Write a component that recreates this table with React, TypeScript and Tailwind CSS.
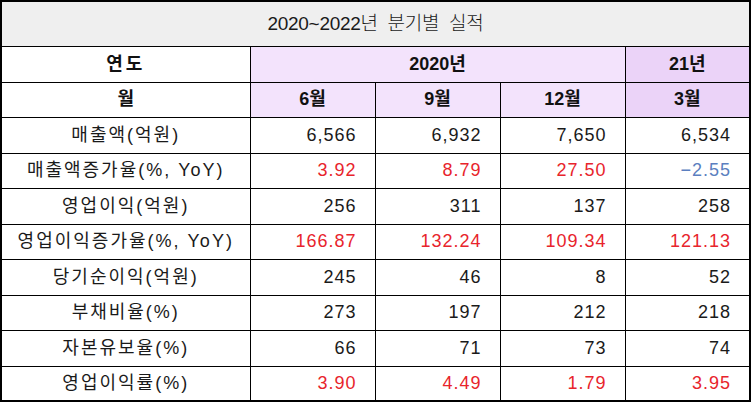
type Cell = { v: string; c?: "red" | "blue" };

const rows: { label: string; cells: Cell[] }[] = [
  { label: "매출액(억원)", cells: [{ v: "6,566" }, { v: "6,932" }, { v: "7,650" }, { v: "6,534" }] },
  {
    label: "매출액증가율(%, YoY)",
    cells: [{ v: "3.92", c: "red" }, { v: "8.79", c: "red" }, { v: "27.50", c: "red" }, { v: "−2.55", c: "blue" }],
  },
  { label: "영업이익(억원)", cells: [{ v: "256" }, { v: "311" }, { v: "137" }, { v: "258" }] },
  {
    label: "영업이익증가율(%, YoY)",
    cells: [{ v: "166.87", c: "red" }, { v: "132.24", c: "red" }, { v: "109.34", c: "red" }, { v: "121.13", c: "red" }],
  },
  { label: "당기순이익(억원)", cells: [{ v: "245" }, { v: "46" }, { v: "8" }, { v: "52" }] },
  { label: "부채비율(%)", cells: [{ v: "273" }, { v: "197" }, { v: "212" }, { v: "218" }] },
  { label: "자본유보율(%)", cells: [{ v: "66" }, { v: "71" }, { v: "73" }, { v: "74" }] },
  {
    label: "영업이익률(%)",
    cells: [{ v: "3.90", c: "red" }, { v: "4.49", c: "red" }, { v: "1.79", c: "red" }, { v: "3.95", c: "red" }],
  },
];

const colorCls = (c?: "red" | "blue") =>
  c === "red" ? "text-[#e8242c]" : c === "blue" ? "text-[#5b7fc0]" : "text-[#1a1a1a]";

export default function App() {
  return (
    <div className="w-[751px] h-[402px] bg-white font-['Liberation_Sans','Noto_Sans_CJK_KR',sans-serif]">
      <table className="table-fixed border-collapse w-[750px] border-2 border-black">
        <colgroup>
          <col className="w-[249px]" />
          <col className="w-[125px]" />
          <col className="w-[125px]" />
          <col className="w-[125px]" />
          <col className="w-[125px]" />
        </colgroup>
        <tbody>
          <tr className="h-[45px] bg-[#efefef]">
            <td colSpan={5} className="border border-black text-center text-[19px] font-light text-[#1a1a1a] tracking-[-0.3px]">
              2020~2022년 &nbsp;분기별 &nbsp;실적
            </td>
          </tr>
          <tr className="h-[36px]">
            <td className="border border-black bg-white text-center text-[18px] font-bold text-[#111] tracking-[3px]">
              연도
            </td>
            <td colSpan={3} className="border border-black bg-[#f3e3fc] text-center text-[18px] font-bold text-[#111]">
              2020년
            </td>
            <td className="border border-black bg-[#ebd3f8] text-center text-[18px] font-bold text-[#111]">21년</td>
          </tr>
          <tr className="h-[35px]">
            <td className="border border-black bg-white text-center text-[18px] font-bold text-[#111]">월</td>
            {["6월", "9월", "12월"].map((m) => (
              <td key={m} className="border border-black bg-[#f3e3fc] text-center text-[18px] font-bold text-[#111]">
                {m}
              </td>
            ))}
            <td className="border border-black bg-[#ebd3f8] text-center text-[18px] font-bold text-[#111]">3월</td>
          </tr>
          {rows.map((r, i) => (
            <tr key={r.label} className={i % 2 === 0 ? "h-[36px]" : "h-[35px]"}>
              <td className="border border-black text-center text-[18px] text-[#1a1a1a] tracking-[2px] whitespace-nowrap">
                {r.label}
              </td>
              {r.cells.map((c, j) => (
                <td
                  key={j}
                  className={`border border-black text-right pr-[18px] text-[18px] tracking-[1px] ${colorCls(c.c)}`}
                >
                  {c.v}
                </td>
              ))}
            </tr>
          ))}
        </tbody>
      </table>
    </div>
  );
}
